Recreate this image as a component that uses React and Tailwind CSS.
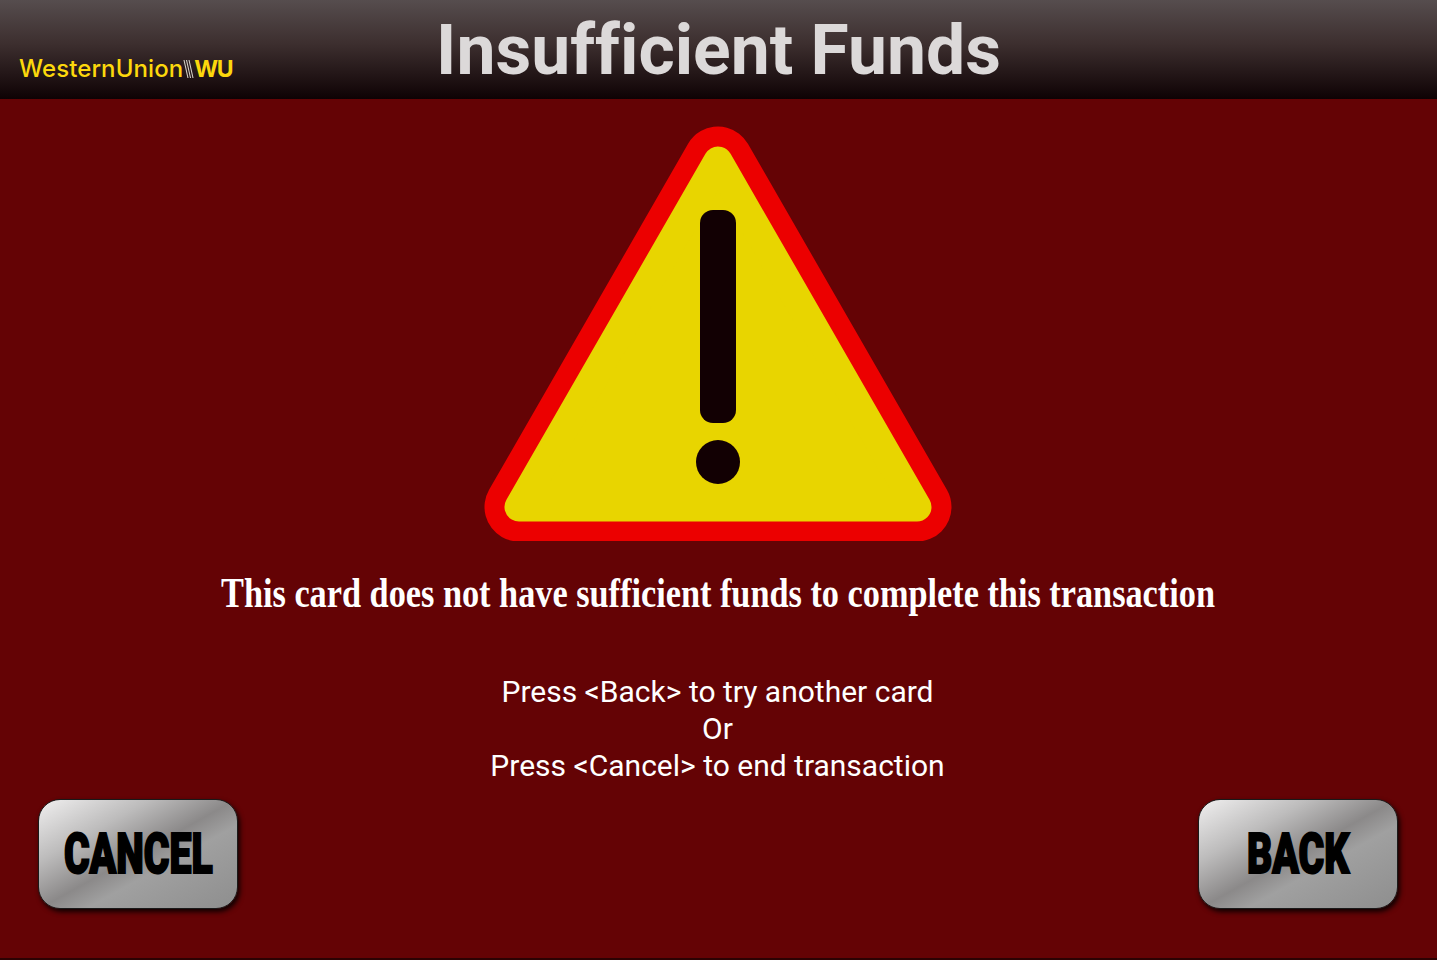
const roboto = { fontFamily: 'Roboto, sans-serif' }

function Logo() {
  return (
    <div className="flex items-center text-[#fcd80c] h-[24px] whitespace-nowrap">
      <span className="font-['Inter',sans-serif] text-[24px] leading-none font-medium tracking-[0.1px]">WesternUnion</span>
      <svg width="12" height="20" viewBox="0 0 12 20" className="shrink-0">
        <path d="M1 1 L5 19 M3.5 1 L7.5 19 M6 1 L10 19" stroke="#d6d1c8" strokeWidth="1.1" fill="none" />
      </svg>
      <span className="font-['Inter',sans-serif] text-[23px] leading-none font-bold tracking-[-1.5px] -ml-[1px]">WU</span>
    </div>
  )
}

function WarningSign() {
  return (
    <svg width="468" height="415" viewBox="484 126 468 415" className="block shrink-0 mr-[1px]">
      <polygon points="519,507 917,507 718,161" fill="#ec0000" stroke="#ec0000" strokeWidth="69" strokeLinejoin="round" />
      <polygon points="519,507 917,507 718,161" fill="#e8d500" stroke="#e8d500" strokeWidth="29" strokeLinejoin="round" />
      <rect x="700" y="210" width="36" height="213" rx="13" fill="#120003" />
      <circle cx="718" cy="462" r="22" fill="#120003" />
    </svg>
  )
}

function PanelButton({ label }) {
  return (
    <button className="w-[200px] h-[110px] rounded-[22px] border border-[#1a1a1a] flex items-center justify-center bg-[linear-gradient(151deg,#f0efef_0%,#bdbcbc_28%,#8b8989_50%,#a0a0a0_62%,#8e8e8e_100%)] shadow-[2px_3px_5px_rgba(0,0,0,0.85)]">
      <span className="inline-block scale-x-[0.7] font-['Roboto',sans-serif] font-black text-[56px] leading-none text-black [-webkit-text-stroke:2px_black]">
        {label}
      </span>
    </button>
  )
}

export default function App() {
  return (
    <div className="w-[1437px] h-[960px] overflow-hidden flex flex-col bg-[#640305]" style={roboto}>
      <header className="relative h-[99px] shrink-0 flex items-center justify-center bg-[linear-gradient(180deg,#564d4e_0%,#3c2e2e_45%,#0e0204_100%)]">
        <div className="absolute left-[19px] top-[57px]">
          <Logo />
        </div>
        <h1 className="mt-[3px] text-[69.6px] leading-none font-bold text-[#dcd9d9] [font-variant-ligatures:none]">Insufficient Funds</h1>
      </header>

      <main className="flex-1 flex flex-col items-center pt-[27px]">
        <WarningSign />
        <p className="mt-[28px] scale-x-[0.816] font-['Liberation_Serif',serif] font-bold text-[42px] leading-[48px] text-white whitespace-nowrap">
          This card does not have sufficient funds to complete this transaction
        </p>
        <div className="mt-[56px] mr-[2px] text-[30px] leading-[37px] text-white text-center">
          <p>Press &lt;Back&gt; to try another card</p>
          <p>Or</p>
          <p>Press &lt;Cancel&gt; to end transaction</p>
        </div>
        <div className="w-full flex justify-between pl-[38px] pr-[39px] mt-[15px]">
          <PanelButton label="CANCEL" />
          <PanelButton label="BACK" />
        </div>
      </main>
      <div className="h-[2px] shrink-0 bg-[#2c0203]" />
    </div>
  )
}
